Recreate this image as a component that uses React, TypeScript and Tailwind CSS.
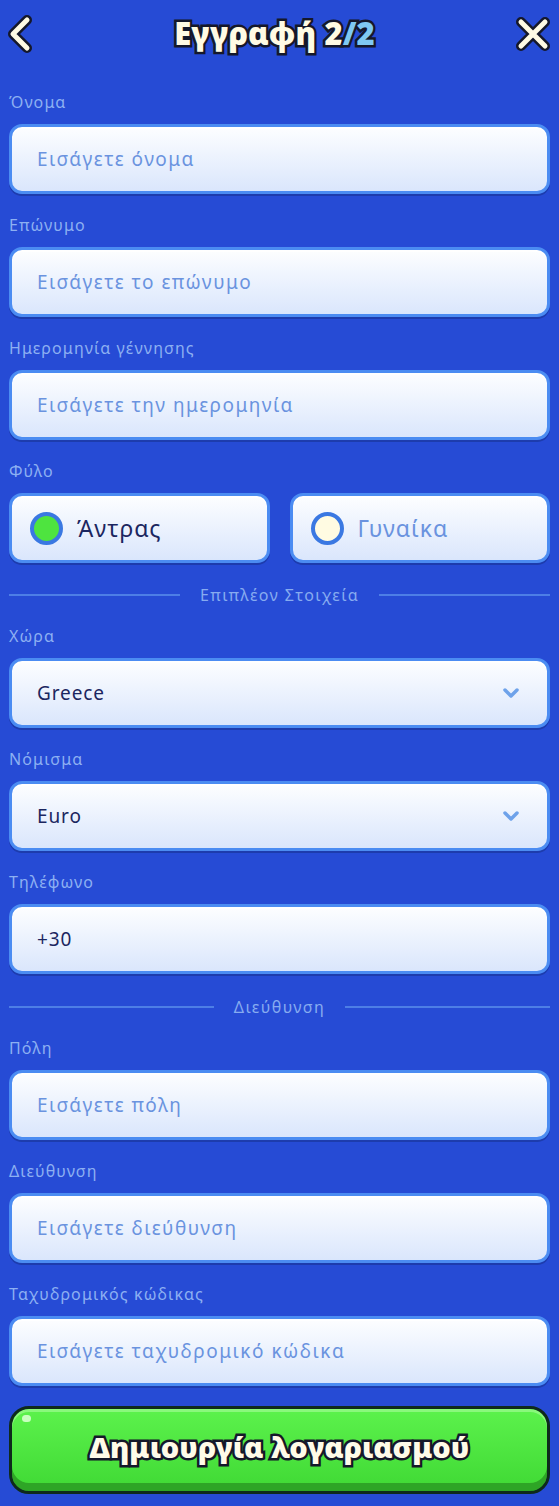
import { ChevronDown } from 'lucide-react'

const font = { fontFamily: '"Noto Sans", "DejaVu Sans", sans-serif' }

function Label({ children }: { children: React.ReactNode }) {
  return <div className="h-[20px] text-[16px] leading-[20px] tracking-[1.1px] text-[#8db0f2]">{children}</div>
}

function Field({ label, placeholder, value, select }: { label: string; placeholder?: string; value?: string; select?: boolean }) {
  return (
    <div className="flex flex-col gap-[12px]">
      <Label>{label}</Label>
      <div className="flex h-[70px] items-center justify-between rounded-[13px] border-[3px] border-[#4b8cf2] bg-gradient-to-b from-[#fdfeff] to-[#dae6fc] px-[25px] shadow-[inset_0_2px_0_#ffffff,0_2px_0_#1d3cad]">
        {value ? (
          <span className="text-[19px] tracking-[0.9px] text-[#1b2660]">{value}</span>
        ) : (
          <span className="text-[19px] tracking-[1.5px] text-[#6a93df]">{placeholder}</span>
        )}
        {select && <ChevronDown size={24} strokeWidth={3.5} className="-mr-[1px] text-[#6ea2ea]" />}
      </div>
    </div>
  )
}

function Divider({ text }: { text: string }) {
  return (
    <div className="flex items-center gap-[20px]">
      <div className="h-[2px] flex-1 bg-[#4d7ee6]" />
      <span className="text-[16px] leading-[20px] tracking-[1.4px] text-[#87abf0]">{text}</span>
      <div className="h-[2px] flex-1 bg-[#4d7ee6]" />
    </div>
  )
}

function GenderOption({ text, selected }: { text: string; selected?: boolean }) {
  return (
    <div className="flex h-[70px] flex-1 items-center gap-[14px] rounded-[13px] border-[3px] border-[#4b8cf2] bg-gradient-to-b from-[#fdfeff] to-[#dae6fc] pl-[18px] shadow-[inset_0_2px_0_#ffffff,0_2px_0_#1d3cad]">
      <div className={`h-[33px] w-[33px] rounded-full border-[4px] border-[#3a78e2] ${selected ? 'bg-[#4ee43f]' : 'bg-[#fffbe2]'}`} />
      <span className={`text-[23px] tracking-[1px] ${selected ? 'text-[#1b2660]' : 'text-[#6a93df]'}`}>{text}</span>
    </div>
  )
}

const outline = '[-webkit-text-stroke:5px_#15182a] [paint-order:stroke_fill]'

export default function App() {
  return (
    <div style={font} className="min-h-[1506px] w-[559px] bg-[#264bd5] px-[9px]">
      {/* Header */}
      <div className="flex h-[70px] items-center justify-between pb-[3px]">
        <svg width="28" height="40" viewBox="0 0 28 40" className="-ml-[1px]">
          <path d="M19 6 L5 20 L19 34" fill="none" stroke="#15182a" strokeWidth="10" strokeLinecap="round" strokeLinejoin="round" />
          <path d="M19 6 L5 20 L19 34" fill="none" stroke="#fffbe4" strokeWidth="5" strokeLinecap="round" strokeLinejoin="round" />
        </svg>
        <h1 className={`text-[31px] font-black tracking-[0.1px] text-[#fffbe4] ${outline}`}>
          Εγγραφή 2<span className="text-[#7fc8f2]">/2</span>
        </h1>
        <svg width="40" height="40" viewBox="0 0 40 40" className="-mr-[3px]">
          <path d="M8 8 L32 32 M32 8 L8 32" fill="none" stroke="#15182a" strokeWidth="10" strokeLinecap="round" />
          <path d="M8 8 L32 32 M32 8 L8 32" fill="none" stroke="#fffbe4" strokeWidth="5" strokeLinecap="round" />
        </svg>
      </div>

      <div className="mt-[22px] flex flex-col">
        <div className="flex flex-col gap-[21px]">
          <Field label="Όνομα" placeholder="Εισάγετε όνομα" />
          <Field label="Επώνυμο" placeholder="Εισάγετε το επώνυμο" />
          <Field label="Ημερομηνία γέννησης" placeholder="Εισάγετε την ημερομηνία" />
          <div className="flex flex-col gap-[12px]">
            <Label>Φύλο</Label>
            <div className="flex gap-[20px]">
              <GenderOption text="Άντρας" selected />
              <GenderOption text="Γυναίκα" />
            </div>
          </div>
        </div>

        <div className="mt-[22px]">
          <Divider text="Επιπλέον Στοιχεία" />
        </div>

        <div className="mt-[21px] flex flex-col gap-[21px]">
          <Field label="Χώρα" value="Greece" select />
          <Field label="Νόμισμα" value="Euro" select />
          <Field label="Τηλέφωνο" value="+30" />
        </div>

        <div className="mt-[23px]">
          <Divider text="Διεύθυνση" />
        </div>

        <div className="mt-[21px] flex flex-col gap-[21px]">
          <Field label="Πόλη" placeholder="Εισάγετε πόλη" />
          <Field label="Διεύθυνση" placeholder="Εισάγετε διεύθυνση" />
          <Field label="Ταχυδρομικός κώδικας" placeholder="Εισάγετε ταχυδρομικό κώδικα" />
        </div>

        {/* Submit */}
        <button className="relative mt-[20px] flex h-[88px] w-full items-center justify-center rounded-[20px] border-[3px] border-[#0e2a1c] bg-gradient-to-b from-[#5cf24c] to-[#3fd934] pb-[6px] shadow-[inset_0_-8px_0_#2ea526,inset_0_3px_0_#8af87c]">
          <span className="absolute left-[10px] top-[6px] h-[7px] w-[9px] rounded-full bg-[#c9ffc0]" />
          <span className={`text-[29px] font-black text-[#fffbe8] ${outline}`}>Δημιουργία λογαριασμού</span>
        </button>
      </div>
    </div>
  )
}
